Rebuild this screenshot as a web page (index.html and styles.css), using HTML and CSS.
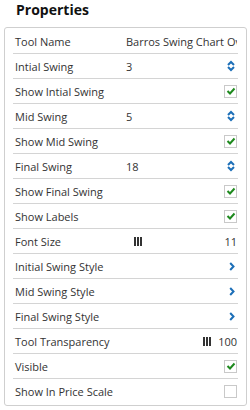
FILE: index.html
```html
<!DOCTYPE html>
<html>
<head>
<meta charset="utf-8">
<link rel="stylesheet" href="styles.css">
</head>
<body>
<h1 class="title">Properties</h1>
<div class="panel">
  <div class="row"><span class="label">Tool Name</span><span class="value clip">Barros Swing Chart Overlay</span></div>
  <div class="row"><span class="label">Intial Swing</span><span class="value">3</span><span class="spin"><svg width="8" height="12" viewBox="0 0 8 12"><path d="M1 5 L4 2 L7 5" /><path d="M1 7 L4 10 L7 7" /></svg></span></div>
  <div class="row"><span class="label">Show Intial Swing</span><span class="value"></span><span class="check on"><svg width="10" height="10" viewBox="0 0 10 10"><path d="M1.5 5 L4 7.5 L8.5 2.5"/></svg></span></div>
  <div class="row"><span class="label">Mid Swing</span><span class="value">5</span><span class="spin"><svg width="8" height="12" viewBox="0 0 8 12"><path d="M1 5 L4 2 L7 5" /><path d="M1 7 L4 10 L7 7" /></svg></span></div>
  <div class="row"><span class="label">Show Mid Swing</span><span class="value"></span><span class="check on"><svg width="10" height="10" viewBox="0 0 10 10"><path d="M1.5 5 L4 7.5 L8.5 2.5"/></svg></span></div>
  <div class="row"><span class="label">Final Swing</span><span class="value">18</span><span class="spin"><svg width="8" height="12" viewBox="0 0 8 12"><path d="M1 5 L4 2 L7 5" /><path d="M1 7 L4 10 L7 7" /></svg></span></div>
  <div class="row"><span class="label">Show Final Swing</span><span class="value"></span><span class="check on"><svg width="10" height="10" viewBox="0 0 10 10"><path d="M1.5 5 L4 7.5 L8.5 2.5"/></svg></span></div>
  <div class="row"><span class="label">Show Labels</span><span class="value"></span><span class="check on"><svg width="10" height="10" viewBox="0 0 10 10"><path d="M1.5 5 L4 7.5 L8.5 2.5"/></svg></span></div>
  <div class="row"><span class="label">Font Size</span><span class="slider"><span class="track"><span class="grip" style="left: calc((100% - 8px) * 0.1)"><svg width="8" height="9" viewBox="0 0 8 9"><rect x="0" y="0" width="2" height="9"/><rect x="3" y="0" width="2" height="9"/><rect x="6" y="0" width="2" height="9"/></svg></span></span><span class="num">11</span></span></div>
  <div class="row"><span class="label">Initial Swing Style</span><span class="value"></span><span class="chev"><svg width="6" height="9" viewBox="0 0 6 9"><path d="M1.2 1 L4.5 4.5 L1.2 8"/></svg></span></div>
  <div class="row"><span class="label">Mid Swing Style</span><span class="value"></span><span class="chev"><svg width="6" height="9" viewBox="0 0 6 9"><path d="M1.2 1 L4.5 4.5 L1.2 8"/></svg></span></div>
  <div class="row"><span class="label">Final Swing Style</span><span class="value"></span><span class="chev"><svg width="6" height="9" viewBox="0 0 6 9"><path d="M1.2 1 L4.5 4.5 L1.2 8"/></svg></span></div>
  <div class="row"><span class="label">Tool Transparency</span><span class="slider"><span class="track"><span class="grip" style="left: calc((100% - 8px) * 1)"><svg width="8" height="9" viewBox="0 0 8 9"><rect x="0" y="0" width="2" height="9"/><rect x="3" y="0" width="2" height="9"/><rect x="6" y="0" width="2" height="9"/></svg></span></span><span class="num">100</span></span></div>
  <div class="row"><span class="label">Visible</span><span class="value"></span><span class="check on"><svg width="10" height="10" viewBox="0 0 10 10"><path d="M1.5 5 L4 7.5 L8.5 2.5"/></svg></span></div>
  <div class="row last"><span class="label">Show In Price Scale</span><span class="value"></span><span class="check"></span></div>
</div>
</body>
</html>
```

FILE: styles.css
```css
html, body {
  margin: 0;
  padding: 0;
  background: #fff;
}
body {
  font-family: "Open Sans", "Noto Sans", sans-serif;
  color: #333;
  width: 250px;
  height: 410px;
  overflow: hidden;
}
.title {
  margin: 0;
  padding: 0 0 0 16px;
  height: 27px;
  line-height: 20px;
  font-size: 14px;
  font-weight: 700;
  color: #111;
}
.panel {
  margin-left: 4px;
  border: 1px solid #cfcfcf;
  border-radius: 3px;
  padding: 1px 8px 0 8px;
  box-sizing: content-box;
  width: 225px;
  height: 376px;
}
.row {
  display: flex;
  align-items: center;
  height: 24px;
  border-bottom: 1px solid #d4d4d4;
  padding-left: 2px;
  padding-right: 1px;
  font-size: 11px;
  white-space: nowrap;
}
.row.last {
  border-bottom: none;
}
.label {
  width: 111px;
  flex: none;
}
.value {
  flex: 1;
  min-width: 0;
}
.clip {
  overflow: hidden;
}
.spin {
  display: flex;
  margin-right: 2px;
}
.spin svg path {
  fill: none;
  stroke: #1c6fb8;
  stroke-width: 2;
}
.check {
  width: 11px;
  height: 11px;
  border: 1px solid #c9c9c9;
  display: flex;
  align-items: center;
  justify-content: center;
  background: #fff;
}
.check svg path {
  fill: none;
  stroke: #1e8a1e;
  stroke-width: 2;
}
.chev {
  display: flex;
  margin-right: 2px;
}
.chev svg path {
  fill: none;
  stroke: #1c6fb8;
  stroke-width: 2;
}
.slider {
  flex: 1;
  display: flex;
  align-items: center;
}
.track {
  flex: 1;
  position: relative;
  height: 9px;
  margin-right: 7px;
}
.grip {
  position: absolute;
  top: 0;
  display: block;
  height: 9px;
}
.grip svg {
  display: block;
  fill: #333;
}
.num {
  flex: none;
  color: #333;
}
```
